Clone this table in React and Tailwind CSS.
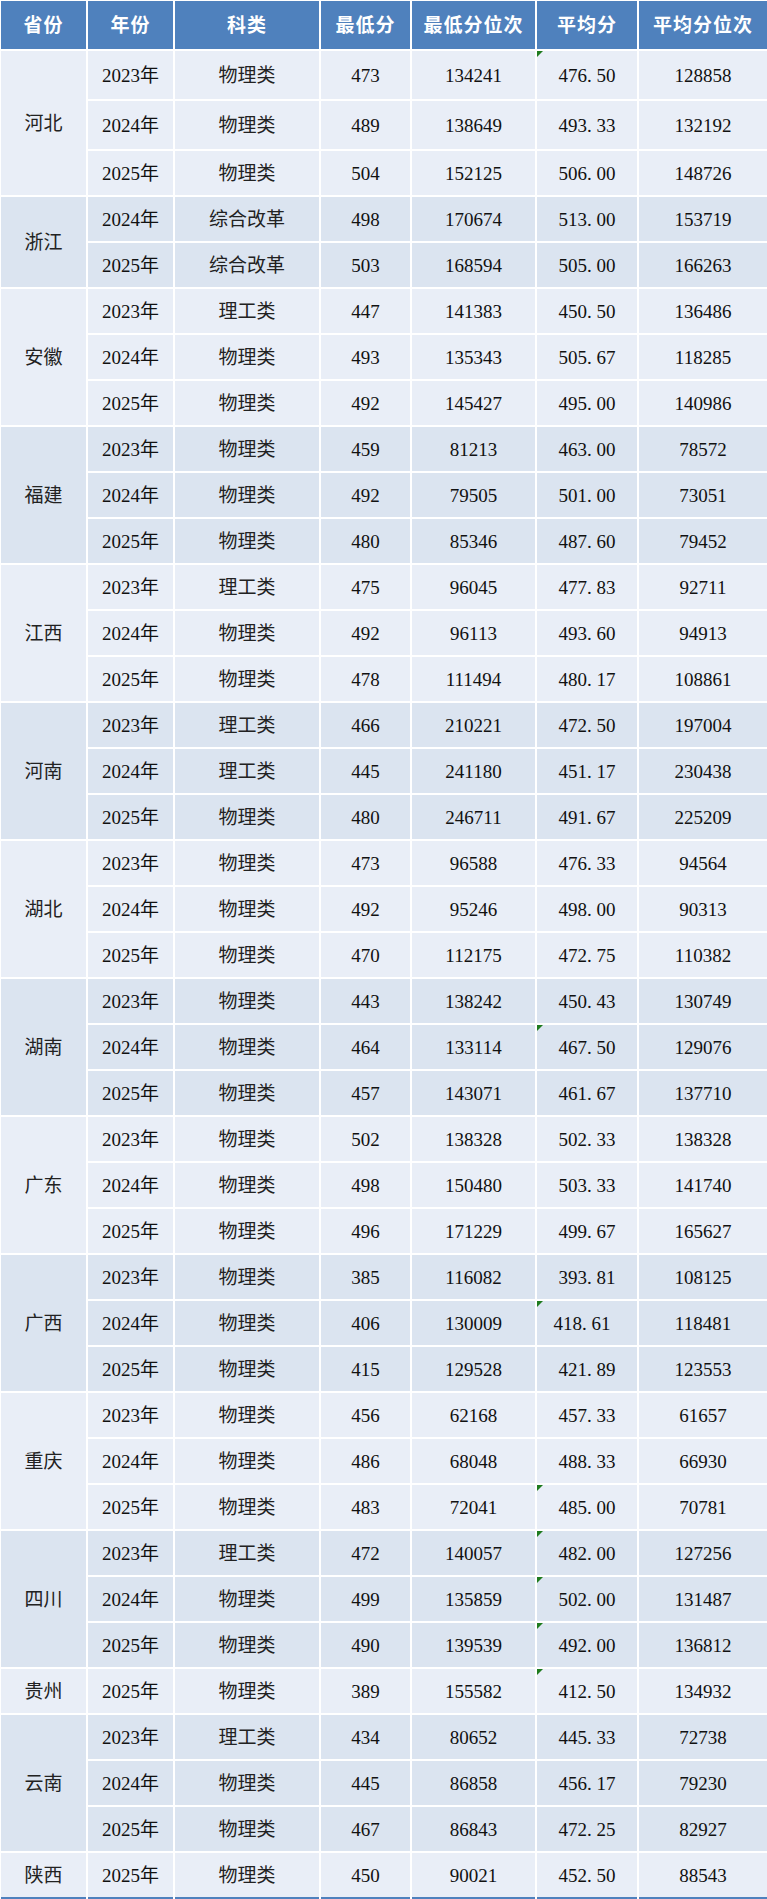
import React from "react";

const groups = [
  ["河北", [["2023年", "物理类", "473", "134241", "476.50", "128858", true], ["2024年", "物理类", "489", "138649", "493.33", "132192"], ["2025年", "物理类", "504", "152125", "506.00", "148726"]]],
  ["浙江", [["2024年", "综合改革", "498", "170674", "513.00", "153719"], ["2025年", "综合改革", "503", "168594", "505.00", "166263"]]],
  ["安徽", [["2023年", "理工类", "447", "141383", "450.50", "136486"], ["2024年", "物理类", "493", "135343", "505.67", "118285"], ["2025年", "物理类", "492", "145427", "495.00", "140986"]]],
  ["福建", [["2023年", "物理类", "459", "81213", "463.00", "78572"], ["2024年", "物理类", "492", "79505", "501.00", "73051"], ["2025年", "物理类", "480", "85346", "487.60", "79452"]]],
  ["江西", [["2023年", "理工类", "475", "96045", "477.83", "92711"], ["2024年", "物理类", "492", "96113", "493.60", "94913"], ["2025年", "物理类", "478", "111494", "480.17", "108861"]]],
  ["河南", [["2023年", "理工类", "466", "210221", "472.50", "197004"], ["2024年", "理工类", "445", "241180", "451.17", "230438"], ["2025年", "物理类", "480", "246711", "491.67", "225209"]]],
  ["湖北", [["2023年", "物理类", "473", "96588", "476.33", "94564"], ["2024年", "物理类", "492", "95246", "498.00", "90313"], ["2025年", "物理类", "470", "112175", "472.75", "110382"]]],
  ["湖南", [["2023年", "物理类", "443", "138242", "450.43", "130749"], ["2024年", "物理类", "464", "133114", "467.50", "129076", true], ["2025年", "物理类", "457", "143071", "461.67", "137710"]]],
  ["广东", [["2023年", "物理类", "502", "138328", "502.33", "138328"], ["2024年", "物理类", "498", "150480", "503.33", "141740"], ["2025年", "物理类", "496", "171229", "499.67", "165627"]]],
  ["广西", [["2023年", "物理类", "385", "116082", "393.81", "108125"], ["2024年", "物理类", "406", "130009", "418.61", "118481", true, true], ["2025年", "物理类", "415", "129528", "421.89", "123553"]]],
  ["重庆", [["2023年", "物理类", "456", "62168", "457.33", "61657"], ["2024年", "物理类", "486", "68048", "488.33", "66930"], ["2025年", "物理类", "483", "72041", "485.00", "70781", true]]],
  ["四川", [["2023年", "理工类", "472", "140057", "482.00", "127256", true], ["2024年", "物理类", "499", "135859", "502.00", "131487", true], ["2025年", "物理类", "490", "139539", "492.00", "136812", true]]],
  ["贵州", [["2025年", "物理类", "389", "155582", "412.50", "134932", true]]],
  ["云南", [["2023年", "理工类", "434", "80652", "445.33", "72738"], ["2024年", "物理类", "445", "86858", "456.17", "79230"], ["2025年", "物理类", "467", "86843", "472.25", "82927"]]],
  ["陕西", [["2025年", "物理类", "450", "90021", "452.50", "88543"]]],
];

const headers = ["省份", "年份", "科类", "最低分", "最低分位次", "平均分", "平均分位次"];

function Dec({ v }) {
  const [a, b] = v.split(".");
  return (
    <span>
      {a}
      <span className="inline-block w-[0.5em] text-left">.</span>
      {b}
    </span>
  );
}

export default function App() {
  const cells = [];
  headers.forEach((h) => {
    cells.push(
      <div key={"h" + h} className="bg-[#4F81BD] text-white font-bold flex items-center justify-center tracking-[1px]">
        {h}
      </div>
    );
  });
  let rowIdx = 0;
  const total = groups.reduce((s, g) => s + g[1].length, 0);
  groups.forEach(([prov, rows], gi) => {
    const bg = gi % 2 === 0 ? "bg-[#E9EEF7]" : "bg-[#DBE4F0]";
    rows.forEach((r, ri) => {
      const isLast = rowIdx === total - 1;
      const bb = isLast ? " border-b-2 border-[#4F81BD]" : "";
      if (ri === 0) {
        cells.push(
          <div
            key={"p" + prov}
            className={`${bg} flex items-center justify-center text-[#222]` + (isLast ? bb : "")}
            style={{ gridRow: `span ${rows.length} / span ${rows.length}` }}
          >
            {prov}
          </div>
        );
      }
      const [year, kind, min, minRank, avg, avgRank, tri, shift] = r;
      const base = `${bg} flex items-center justify-center text-[#111]` + bb;
      cells.push(<div key={prov + ri + "y"} className={base}>{year}</div>);
      cells.push(<div key={prov + ri + "k"} className={base + " text-[#222]"}>{kind}</div>);
      cells.push(<div key={prov + ri + "m"} className={base}>{min}</div>);
      cells.push(<div key={prov + ri + "r"} className={base}>{minRank}</div>);
      cells.push(
        <div key={prov + ri + "a"} className={base + " relative"}>
          {tri && (
            <svg className="absolute left-0 top-0" width="6" height="6" viewBox="0 0 6 6">
              <polygon points="0,0 6,0 0,6" fill="#1E7B1E" />
            </svg>
          )}
          <span className={shift ? "mr-[10px]" : ""}>
            <Dec v={avg} />
          </span>
        </div>
      );
      cells.push(<div key={prov + ri + "q"} className={base}>{avgRank}</div>);
      rowIdx++;
    });
  });

  return (
    <div className="bg-white w-[767px] h-[1899px] overflow-hidden pl-[1px] pt-[1px]">
      <div
        className="grid gap-[2px] grid-cols-[85px_85px_144px_89px_123px_100px_128px] grid-rows-[48px_48px_48px_44px_repeat(36,44px)_46px] text-[19px] leading-none"
        style={{ fontFamily: '"Liberation Serif", "Noto Sans CJK SC", serif' }}
      >
        {cells}
      </div>
    </div>
  );
}
